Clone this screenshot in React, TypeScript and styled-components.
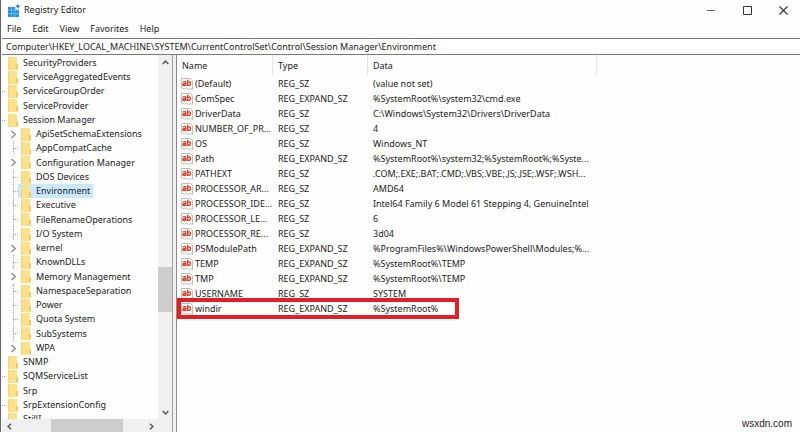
import React from "react";
import styled, { createGlobalStyle, css } from "styled-components";

const Global = createGlobalStyle`
  *, *::before, *::after { box-sizing: border-box; }
  html, body { margin: 0; height: 100%; }
  #root { height: 100%; }
  body {
    overflow: hidden;
    background: #fefefe;
    color: #1b1b1b;
    font-family: "Noto Sans", "Open Sans", sans-serif;
    font-size: 9px;
  }
  button, input { font: inherit; color: inherit; }
`;

const Window = styled.div`
  display: flex;
  flex-direction: column;
  height: 100vh;
  padding-left: 1px;
  border-left: 1px solid #66666a;
`;

const TitleBar = styled.header`
  display: flex;
  align-items: center;
  height: 20px;
  padding-left: 5px;
  gap: 4px;
`;

const Title = styled.h1`
  flex: 1;
  margin: 0;
  font-size: 9px;
  line-height: 14px;
  font-weight: 400;
`;

const WindowButtons = styled.div`
  display: flex;
  gap: 3px;
`;

const WindowButton = styled.button`
  display: grid;
  place-items: center;
  width: 33px;
  height: 20px;
  padding: 0;
  border: 0;
  background: transparent;
`;

const MenuBar = styled.nav`
  display: flex;
  align-items: center;
  height: 18px;
  padding-left: 5px;
  gap: 11px;
`;

const MenuItem = styled.button`
  padding: 0;
  border: 0;
  background: transparent;
  line-height: 14px;
`;

const AddressBar = styled.input`
  flex: none;
  width: 100%;
  height: 17px;
  padding: 0 4px;
  border: solid #7b7b7b;
  border-width: 1px 0;
  border-radius: 0;
  outline: 0;
  background: #fff;
`;

const Body = styled.main`
  display: flex;
  flex: 1;
  min-height: 0;
`;

const TreePane = styled.section`
  display: grid;
  flex: none;
  grid-template-columns: 1fr 14px;
  grid-template-rows: minmax(0, 1fr) 13px;
  width: 171px;
  border-right: 1px solid #a0a0a0;
`;

const Splitter = styled.div`
  flex: none;
  width: 3px;
  background: #f0f0f0;
`;

const Tree = styled.ul`
  margin: 0;
  padding: 1px 0 0;
  overflow: hidden;
  list-style: none;
`;

const TreeItem = styled.li<{ $nested?: boolean }>`
  display: flex;
  align-items: center;
  height: 14px;
  padding-left: ${(p) => (p.$nested ? 5 : 0)}px;
  white-space: nowrap;

  &:nth-child(4n) {
    height: 15px;
  }
`;

const Guide = styled.span<{ $nested?: boolean; $dotted?: boolean }>`
  display: grid;
  align-self: stretch;
  flex: none;
  align-items: center;
  width: ${(p) => (p.$nested ? 11 : 3)}px;

  svg {
    margin-left: 2px;
  }

  ${(p) =>
    p.$dotted &&
    css`
      &::before {
        content: "";
        width: ${p.$nested ? 5 : 3}px;
        margin-left: ${p.$nested ? 6 : 0}px;
        border-top: 1px dotted #a5a5a5;
      }
    `}

  ${(p) =>
    p.$nested &&
    p.$dotted &&
    css`
      background: repeating-linear-gradient(#a5a5a5 0 1px, transparent 1px 2px) 6px 0 / 1px 100% no-repeat;
    `}
`;

const TreeLabel = styled.button<{ $selected?: boolean }>`
  display: flex;
  align-items: center;
  height: 14px;
  gap: 4px;
  padding: 0 3px;
  border: 0;
  background: ${(p) => (p.$selected ? "#cce8ff" : "transparent")};
  line-height: 14px;
`;

const ScrollBar = styled.div<{ $horizontal?: boolean }>`
  display: flex;
  flex-direction: ${(p) => (p.$horizontal ? "row" : "column")};
  background: #f0f0f0;
`;

const ScrollButton = styled.button`
  display: grid;
  flex: none;
  place-items: center;
  width: 14px;
  height: 14px;
  padding: 0;
  border: 0;
  background: transparent;
`;

const Track = styled.div<{ $before: number; $thumb: number; $after: number; $horizontal?: boolean }>`
  display: grid;
  flex: 1;
  ${(p) => (p.$horizontal ? "grid-template-columns" : "grid-template-rows")}:
    ${(p) => `${p.$before}fr ${p.$thumb}fr ${p.$after}fr`};
`;

const Thumb = styled.div<{ $horizontal?: boolean }>`
  ${(p) => (p.$horizontal ? "grid-column: 2" : "grid-row: 2")};
  background: #cdcdcd;
`;

const Corner = styled.div`
  background: #f0f0f0;
`;

const ListPane = styled.section`
  display: flex;
  flex: 1;
  flex-direction: column;
  min-width: 0;
  border-left: 1px solid #8a8a8a;
`;

const Values = styled.table`
  width: 420px;
  table-layout: fixed;
  border-collapse: separate;
  border-spacing: 0;
`;

const Column = styled.col<{ $width: number }>`
  width: ${(p) => p.$width}px;
`;

const HeadCell = styled.th`
  height: 21px;
  padding: 1px 5px 0;
  border-right: 1px solid #e5e5e5;
  font-weight: 400;
  text-align: left;
  line-height: 14px;
`;

const Cell = styled.td`
  height: 15px;
  padding: 0 0 0 5px;
  line-height: 15px;
  white-space: nowrap;
`;

const NameCell = styled(Cell)`
  padding-left: 4px;
`;

const NameBox = styled.div`
  display: flex;
  align-items: center;
  gap: 2px;

  svg {
    flex: none;
  }
`;

const ValueRow = styled.tr<{ $marked?: boolean }>`
  position: relative;

  ${(p) =>
    p.$marked &&
    css`
      &::after {
        content: "";
        position: absolute;
        inset: -3px auto -3px 0;
        width: 282px;
        border: 4px solid #e01f26;
      }
    `}
`;

const Footer = styled.footer`
  margin-top: auto;
  padding: 0 8px 1px 0;
  font-family: "Liberation Sans", Arial, sans-serif;
  font-size: 10px;
  line-height: 14px;
  text-align: right;
`;

const Logo = () => (
  <svg width="13" height="13" viewBox="0 0 13 13" aria-hidden="true">
    <path d="M1 3h7v3h4v7H1z" fill="#2b8fd6" />
    <path d="M1 6h11M1 9.500h11M4.500 3v10M8 3v10" stroke="#5cc0f2" strokeWidth="1" />
    <path d="M9 1.500l2.500-1 1.300 2.300-2.500 1.500z" fill="#1f7fc4" />
  </svg>
);

const Folder = () => (
  <svg width="11" height="13" viewBox="0 0 11 13" aria-hidden="true">
    <path d="M0 0h9v7l1 1v5H0z" fill="#fde08a" />
    <path d="M0 0h1v13H0z" fill="#f6d274" />
    <path d="M8 7h2v5H8z" fill="#f2cb66" />
  </svg>
);

const StringIcon = () => (
  <svg width="12" height="12" viewBox="0 0 12 12" aria-hidden="true">
    <path d="M.5.5h9l2 2v9l-2-1-2 1-2-1.500-2 1-3-1z" fill="#fff" stroke="#bdbdbd" />
    <g fill="none" stroke="#d8432b" strokeWidth="1.4">
      <path d="M1.900 3.900q2.900-.9 2.900 1v3M4.700 5.500q-2.900-.1-2.900 1.200 0 1.500 2.900.4" />
      <path d="M6.700 1.700v6.200M6.700 4.300q2.800-1.200 2.800 1.200T6.700 7.200" />
    </g>
  </svg>
);

const Chevron = ({ turn = 0, size = 7, color = "#555", weight = 1.6 }) => (
  <svg width={size} height={size} viewBox="0 0 8 8" aria-hidden="true">
    <path d="M2.2.8 5.6 4 2.2 7.2" fill="none" stroke={color} strokeWidth={weight} transform={`rotate(${turn} 4 4)`} />
  </svg>
);

type Key = { name: string; nested?: boolean; open?: boolean; dotted?: boolean; selected?: boolean };

const keys: Key[] = [
  { name: "SecurityProviders" },
  { name: "ServiceAggregatedEvents" },
  { name: "ServiceGroupOrder", dotted: true },
  { name: "ServiceProvider" },
  { name: "Session Manager", dotted: true },
  { name: "ApiSetSchemaExtensions", nested: true, open: true },
  { name: "AppCompatCache", nested: true },
  { name: "Configuration Manager", nested: true, open: true },
  { name: "DOS Devices", nested: true },
  { name: "Environment", nested: true, selected: true },
  { name: "Executive", nested: true },
  { name: "FileRenameOperations", nested: true },
  { name: "I/O System", nested: true },
  { name: "kernel", nested: true, open: true },
  { name: "KnownDLLs", nested: true },
  { name: "Memory Management", nested: true, open: true },
  { name: "NamespaceSeparation", nested: true },
  { name: "Power", nested: true },
  { name: "Quota System", nested: true },
  { name: "SubSystems", nested: true },
  { name: "WPA", nested: true, open: true },
  { name: "SNMP" },
  { name: "SQMServiceList", dotted: true },
  { name: "Srp" },
  { name: "SrpExtensionConfig", dotted: true },
  { name: "StillI" },
];

const values: [string, string, string][] = [
  ["(Default)", "REG_SZ", "(value not set)"],
  ["ComSpec", "REG_EXPAND_SZ", "%SystemRoot%\\system32\\cmd.exe"],
  ["DriverData", "REG_SZ", "C:\\Windows\\System32\\Drivers\\DriverData"],
  ["NUMBER_OF_PR...", "REG_SZ", "4"],
  ["OS", "REG_SZ", "Windows_NT"],
  ["Path", "REG_EXPAND_SZ", "%SystemRoot%\\system32;%SystemRoot%;%Syste..."],
  ["PATHEXT", "REG_SZ", ".COM;.EXE;.BAT;.CMD;.VBS;.VBE;.JS;.JSE;.WSF;.WSH..."],
  ["PROCESSOR_AR...", "REG_SZ", "AMD64"],
  ["PROCESSOR_IDE...", "REG_SZ", "Intel64 Family 6 Model 61 Stepping 4, GenuineIntel"],
  ["PROCESSOR_LE...", "REG_SZ", "6"],
  ["PROCESSOR_RE...", "REG_SZ", "3d04"],
  ["PSModulePath", "REG_EXPAND_SZ", "%ProgramFiles%\\WindowsPowerShell\\Modules;%..."],
  ["TEMP", "REG_EXPAND_SZ", "%SystemRoot%\\TEMP"],
  ["TMP", "REG_EXPAND_SZ", "%SystemRoot%\\TEMP"],
  ["USERNAME", "REG_SZ", "SYSTEM"],
  ["windir", "REG_EXPAND_SZ", "%SystemRoot%"],
];

export default function App() {
  return (
    <>
      <Global />
      <Window>
        <TitleBar>
          <Logo />
          <Title>Registry Editor</Title>
          <WindowButtons>
            <WindowButton aria-label="Minimize">
              <svg width="9" height="9" viewBox="0 0 9 9"><path d="M0 4.500h8" stroke="#666" /></svg>
            </WindowButton>
            <WindowButton aria-label="Maximize">
              <svg width="9" height="9" viewBox="0 0 9 9"><path d="M.5.5h8v8h-8z" fill="none" stroke="#333" /></svg>
            </WindowButton>
            <WindowButton aria-label="Close">
              <svg width="9" height="9" viewBox="0 0 9 9"><path d="M.5.5l8 8M8.500.5l-8 8" stroke="#333" strokeWidth="1.1" /></svg>
            </WindowButton>
          </WindowButtons>
        </TitleBar>
        <MenuBar aria-label="Menu">
          {["File", "Edit", "View", "Favorites", "Help"].map((m) => (
            <MenuItem key={m}>{m}</MenuItem>
          ))}
        </MenuBar>
        <AddressBar
          aria-label="Key path"
          defaultValue="Computer\HKEY_LOCAL_MACHINE\SYSTEM\CurrentControlSet\Control\Session Manager\Environment"
        />
        <Body>
          <TreePane aria-label="Keys">
            <Tree>
              {keys.map((k) => (
                <TreeItem key={k.name} $nested={k.nested}>
                  <Guide $nested={k.nested} $dotted={k.nested ? !k.open : k.dotted}>
                    {k.open && <Chevron color="#8c8c8c" size={9} weight={1.2} />}
                  </Guide>
                  <TreeLabel $selected={k.selected}>
                    <Folder />
                    {k.name}
                  </TreeLabel>
                </TreeItem>
              ))}
            </Tree>
            <ScrollBar>
              <ScrollButton aria-label="Scroll up"><Chevron turn={-90} /></ScrollButton>
              <Track $before={197} $thumb={45} $after={93}><Thumb /></Track>
              <ScrollButton aria-label="Scroll down"><Chevron turn={90} /></ScrollButton>
            </ScrollBar>
            <ScrollBar $horizontal>
              <ScrollButton aria-label="Scroll left"><Chevron turn={180} /></ScrollButton>
              <Track $horizontal $before={35} $thumb={72} $after={21}><Thumb $horizontal /></Track>
              <ScrollButton aria-label="Scroll right"><Chevron /></ScrollButton>
            </ScrollBar>
            <Corner />
          </TreePane>
          <Splitter />
          <ListPane aria-label="Values">
            <Values>
              <colgroup>
                <Column $width={96} />
                <Column $width={95} />
                <Column $width={229} />
              </colgroup>
              <thead>
                <tr>
                  <HeadCell>Name</HeadCell>
                  <HeadCell>Type</HeadCell>
                  <HeadCell>Data</HeadCell>
                </tr>
              </thead>
              <tbody>
                {values.map(([name, type, data]) => (
                  <ValueRow key={name} $marked={name === "windir"}>
                    <NameCell>
                      <NameBox>
                        <StringIcon />
                        {name}
                      </NameBox>
                    </NameCell>
                    <Cell>{type}</Cell>
                    <Cell>{data}</Cell>
                  </ValueRow>
                ))}
              </tbody>
            </Values>
            <Footer>wsxdn.com</Footer>
          </ListPane>
        </Body>
      </Window>
    </>
  );
}
